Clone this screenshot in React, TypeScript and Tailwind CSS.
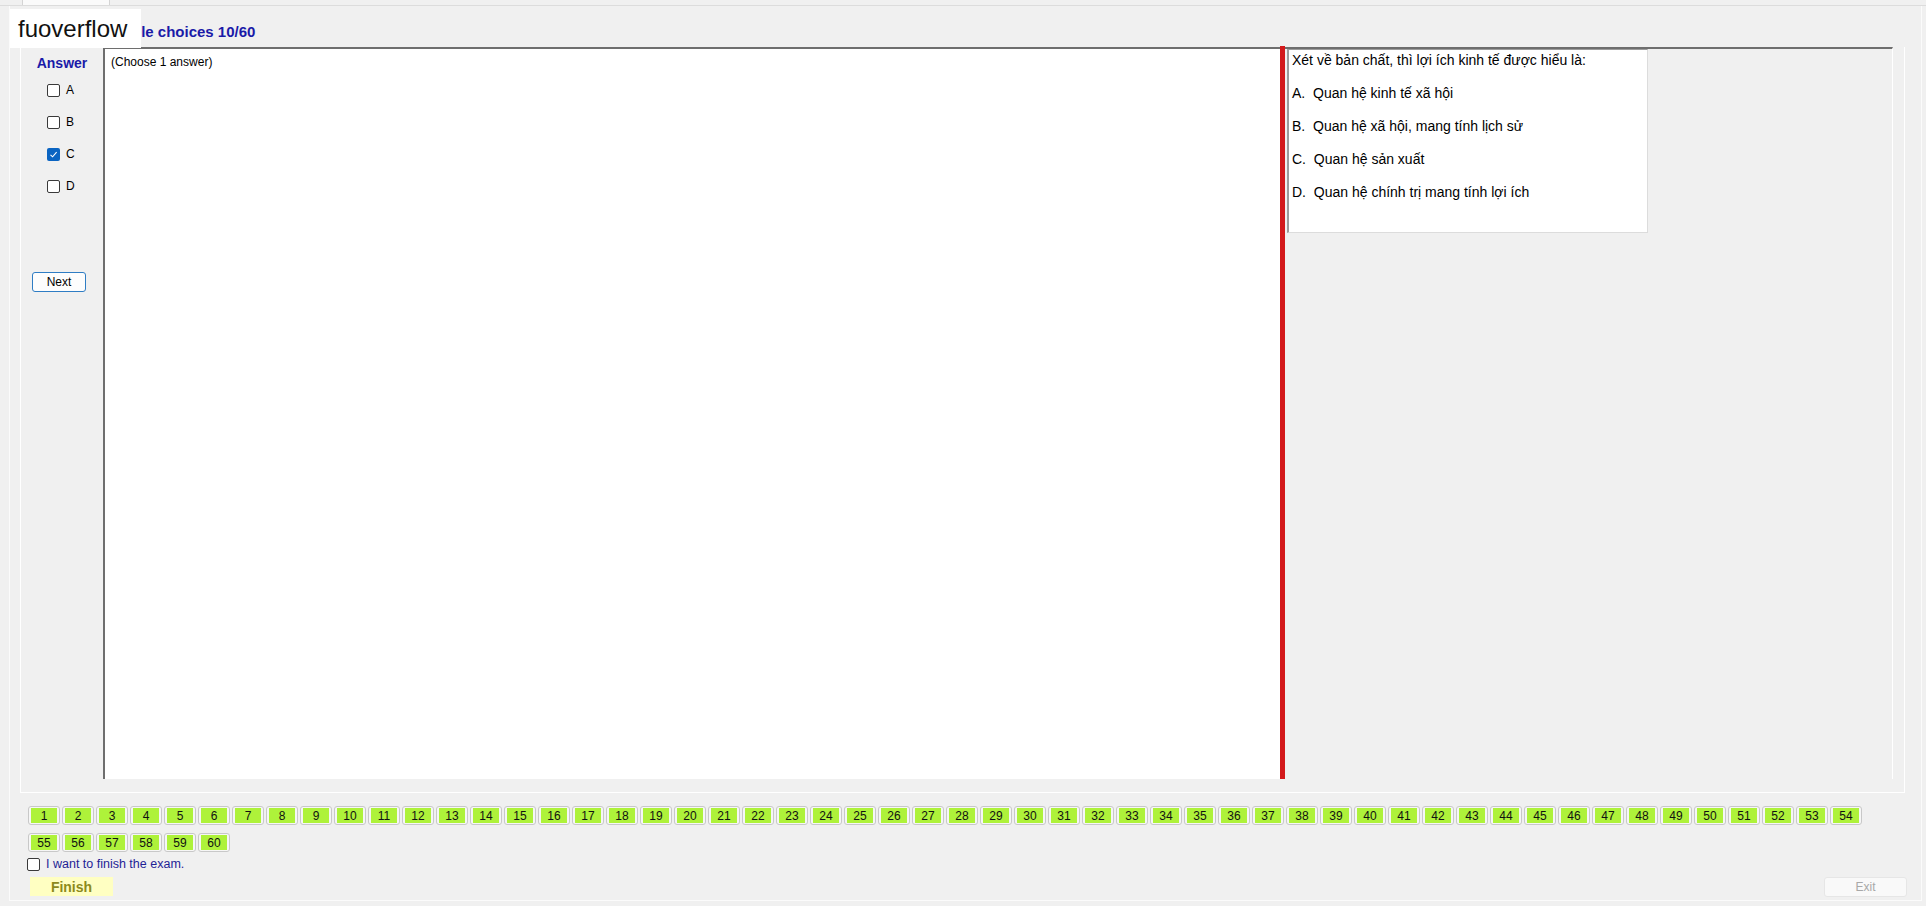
import React from "react";

const answers = ["A", "B", "C", "D"];
const picked = "C";
const questions = Array.from({ length: 60 }, (_, i) => i + 1);

const options = [
  "A.  Quan hệ kinh tế xã hội",
  "B.  Quan hệ xã hội, mang tính lịch sử",
  "C.  Quan hệ sản xuất",
  "D.  Quan hệ chính trị mang tính lợi ích",
];

function CheckBox({ checked }: { checked?: boolean }) {
  if (checked) {
    return (
      <span className="flex h-[13px] w-[13px] items-center justify-center rounded-[2px] bg-[#0a64c2]">
        <svg width="9" height="9" viewBox="0 0 9 9" fill="none">
          <path d="M1.5 4.8 L3.6 6.8 L7.6 2.2" stroke="white" strokeWidth="1.1" />
        </svg>
      </span>
    );
  }
  return <span className="h-[13px] w-[13px] rounded-[2px] border border-[#3a3a3a] bg-white" />;
}

export default function App() {
  return (
    <div className="relative flex h-[906px] w-[1926px] flex-col overflow-hidden bg-[#f0f0f0] text-black [font-family:'Liberation_Sans',Arial,sans-serif]">
      {/* tab header strip */}
      <div className="flex h-[6px] shrink-0 border-b border-[#dcdcdc] pl-[22px]">
        <div className="w-[88px] border-x border-[#d4d4d4] bg-[#fafafa]" />
      </div>

      <div className="ml-[9px] mr-[4px] flex h-[895px] flex-col border-l border-r border-b border-[#fbfbfb]">
        {/* caption */}
        <div className="h-[41px] shrink-0 pl-[87px] pt-[17px] text-[15px] font-bold leading-[17px] text-[#1a1aa8]">
          Multiple choices 10/60
        </div>

        {/* group box */}
        <div className="ml-[10px] w-[1885px] border-l border-r border-b border-white pb-[13px]">
          <div className="mr-[11px] flex h-[732px]">
            {/* answer column */}
            <div className="flex w-[82px] shrink-0 flex-col">
              <div className="pt-[8px] text-center text-[14px] font-bold leading-[16px] text-[#1a1aa8]">
                Answer
              </div>
              <div className="mt-[3px] flex flex-col pl-[26px]">
                {answers.map((a) => (
                  <label key={a} className="flex h-[32px] items-center gap-[6px] text-[12px]">
                    <CheckBox checked={a === picked} />
                    <span>{a}</span>
                  </label>
                ))}
              </div>
              <button className="ml-[11px] mt-[70px] h-[20px] w-[54px] rounded-[3px] border border-[#2f7dc4] bg-[#fdfdfd] text-[12px] leading-[18px]">
                Next
              </button>
            </div>

            {/* content area */}
            <div className="flex flex-1 border-t-2 border-l-2 border-[#6e6e6e] border-r border-r-white">
              <div className="w-[1175px] bg-white pl-[6px] pt-[6px] text-[12px] leading-[14px]">
                (Choose 1 answer)
              </div>
              <div className="-mt-[3px] w-[5px] shrink-0 bg-[#d3191b]" />
              <div className="flex-1 pl-[2px]">
                <div className="flex h-[184px] w-[361px] flex-col gap-[16px] border-l-2 border-t border-[#9c9c9c] border-r border-b border-r-[#dcdcdc] border-b-[#dcdcdc] bg-white pl-[3px] pt-[2px] text-[14px] leading-[17px]">
                  <div>Xét về bản chất, thì lợi ích kinh tế được hiểu là:</div>
                  {options.map((o) => (
                    <div key={o} className="whitespace-pre">
                      {o}
                    </div>
                  ))}
                </div>
              </div>
            </div>
          </div>
        </div>

        {/* question navigator */}
        <div className="flex flex-1 flex-col pl-[18px] pt-[13px]">
          <div className="flex w-[1840px] flex-wrap gap-x-[2px] gap-y-[8px]">
            {questions.map((n) => (
              <div
                key={n}
                className="h-[19px] w-[32px] rounded-[3px] border border-[#c8c8c8] bg-[#f6f6f6] px-[2px] py-[1px]"
              >
                <div className="flex h-full items-center justify-center bg-[#aef23a] text-[12px] leading-none text-[#111]">
                  {n}
                </div>
              </div>
            ))}
          </div>
          <label className="-ml-[1px] mt-[6px] flex h-[13px] items-center gap-[6px] text-[12.5px] text-[#1f1f96]">
            <CheckBox />
            <span>I want to finish the exam.</span>
          </label>
          <div className="mr-[14px] mt-[6px] flex items-start justify-between">
            <button className="ml-[2px] h-[19px] w-[83px] bg-[#ffffc2] text-[14px] font-bold leading-[20px] text-[#8c8a1c]">
              Finish
            </button>
            <button className="h-[20px] w-[83px] rounded-[3px] border border-[#e6e6e6] bg-[#f9f9f9] text-[12px] leading-[18px] text-[#a8a8a8]">
              Exit
            </button>
          </div>
        </div>
      </div>

      {/* site watermark */}
      <div className="absolute left-[10px] top-[9px] flex h-[39px] w-[131px] items-center bg-white pl-[8px] text-[24px] leading-none text-[#111]">
        fuoverflow
      </div>
    </div>
  );
}
